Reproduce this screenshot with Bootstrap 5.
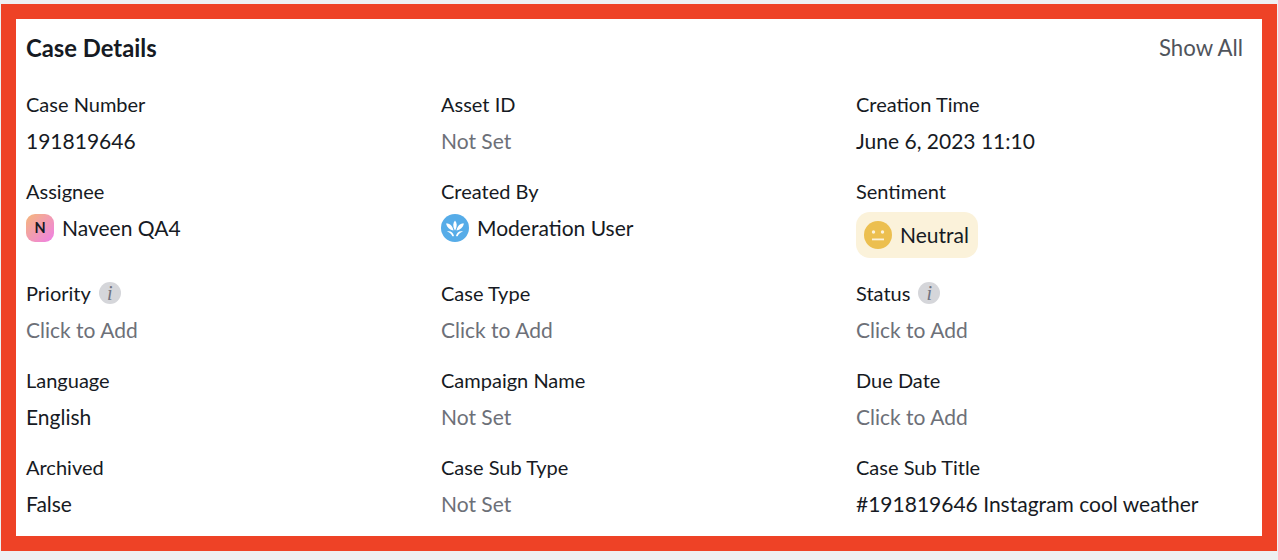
<!doctype html>
<html><head><meta charset="utf-8">
<link href="https://cdn.jsdelivr.net/npm/bootstrap@5.3.0/dist/css/bootstrap.min.css" rel="stylesheet">
<style>
html,body{background:#eef0f2;height:560px;overflow:hidden}
body{font-family:Lato,"Liberation Sans",sans-serif;color:#161a23;font-size:20px;line-height:24px}
.frame{margin:4px 1px 0 1px;height:547px;border:15px solid #ee4226;background:#fff;padding:17px 19px 0 10px}
.head-row{height:24px;margin-bottom:32px}
.head-title{font-size:23.8px;font-weight:700}
.show-all{font-size:22.2px;color:#50545c}
.fields{display:grid;grid-template-columns:415px 415px 1fr;grid-template-rows:63px 78px 63px 63px 63px;row-gap:24px}
.lab{font-size:20px;height:24px;margin-bottom:13px;white-space:nowrap}
.val{font-size:21px;height:24px;white-space:nowrap}
.muted-val{color:#6d7078}
.ava{width:28px;height:28px;border-radius:9px;background:linear-gradient(135deg,#f5b77a,#ef7fe8);font-size:14.500px;font-weight:700;flex:none}
.mod{width:28px;height:28px;flex:none}
.chip{width:122px;height:46px;margin-top:-4px;border-radius:14px;background:#fbf2da;padding-left:8px}
.inf{width:22px;height:22px;flex:none;margin-left:8px;border-radius:50%;background:#d5d6da;color:#70737f;font:italic 400 20px/22px "Liberation Serif",serif;text-align:center}
</style></head><body>
<div class="frame">
 <div class="head-row d-flex justify-content-between align-items-center">
  <div class="head-title">Case Details</div><div class="show-all">Show All</div>
 </div>
 <div class="fields">
  <div><div class="lab">Case Number</div><div class="val">191819646</div></div>
  <div><div class="lab">Asset ID</div><div class="val muted-val">Not Set</div></div>
  <div><div class="lab">Creation Time</div><div class="val">June 6, 2023 11:10</div></div>

  <div><div class="lab">Assignee</div><div class="val d-flex align-items-center gap-2"><span class="ava d-flex align-items-center justify-content-center">N</span>Naveen QA4</div></div>
  <div><div class="lab">Created By</div><div class="val d-flex align-items-center gap-2"><svg class="mod" viewBox="0 0 28 28"><circle cx="14" cy="14" r="14" fill="#56ace8"/><path d="M14 6.500c2.200 2.500 2.200 6 .6 9l-.6 1l-.6-1C11.800 12.500 11.800 9 14 6.500zM5 9.500c3.800-.3 6.500 2 7.500 7c-3.800-.5-6.500-3-7.500-7zM23 9.500c-3.800-.3-6.500 2-7.500 7c3.800-.5 6.500-3 7.500-7zM6 17.500c3.200-1 6.200.5 7 4.500c-.4.300-1 .4-1.600.3c-1.200-2.500-2.800-4-5.400-4.800zM22 17.500c-3.200-1-6.200.5-7 4.500c.4.300 1 .4 1.600.3c1.200-2.500 2.800-4 5.400-4.800z" fill="#fff"/></svg>Moderation User</div></div>
  <div><div class="lab">Sentiment</div><div class="chip val d-inline-flex align-items-center gap-2"><svg class="mod" viewBox="0 0 28 28"><circle cx="14" cy="14" r="14" fill="#ecbf4f"/><circle cx="9.500" cy="11" r="1.700" fill="#fbf2da"/><circle cx="18.500" cy="11" r="1.700" fill="#fbf2da"/><rect x="8" y="17.500" width="12" height="1.800" fill="#fbf2da"/></svg>Neutral</div></div>

  <div><div class="lab d-flex align-items-center">Priority<span class="inf">i</span></div><div class="val muted-val">Click to Add</div></div>
  <div><div class="lab">Case Type</div><div class="val muted-val">Click to Add</div></div>
  <div><div class="lab d-flex align-items-center">Status<span class="inf">i</span></div><div class="val muted-val">Click to Add</div></div>

  <div><div class="lab">Language</div><div class="val">English</div></div>
  <div><div class="lab">Campaign Name</div><div class="val muted-val">Not Set</div></div>
  <div><div class="lab">Due Date</div><div class="val muted-val">Click to Add</div></div>

  <div><div class="lab">Archived</div><div class="val">False</div></div>
  <div><div class="lab">Case Sub Type</div><div class="val muted-val">Not Set</div></div>
  <div><div class="lab">Case Sub Title</div><div class="val">#191819646 Instagram cool weather</div></div>
 </div>
</div>
</body></html>
